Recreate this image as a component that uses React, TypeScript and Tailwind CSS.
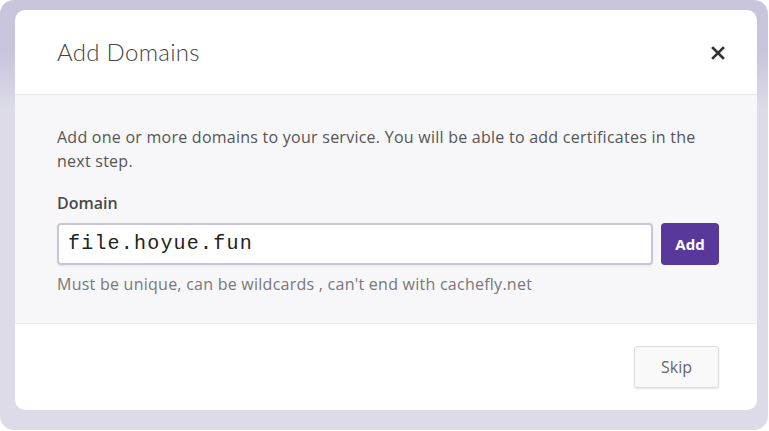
import React from "react";

export default function App() {
  return (
    <div className="w-[769px] h-[431px] bg-white">
      <div className="w-[768px] h-[430px] rounded-[14px] bg-gradient-to-b from-[#c8c4dc] from-[12%] to-[#dcdbe7] to-[25%] pt-[10px] pl-[15px]">
        <div className="w-[742px] h-[400px] rounded-[10px] bg-white overflow-hidden flex flex-col">
          <div className="h-[85px] flex items-center justify-between pl-[42px] pr-[32px] border-b border-[#ebebef]">
            <h1
              className="text-[24px] font-light text-[#444] tracking-[0.3px]"
              style={{ fontFamily: "Lato, 'Open Sans', sans-serif" }}
            >
              Add Domains
            </h1>
            <svg width="14" height="14" viewBox="0 0 14 14" className="mt-[2px]">
              <path d="M2 2 L12 12 M12 2 L2 12" stroke="#333" strokeWidth="2.6" strokeLinecap="square" />
            </svg>
          </div>
          <div
            className="bg-[#f7f7f9] pl-[42px] pr-[38px] pt-[30px] pb-[27px] text-[16px] leading-[24px] text-[#555] tracking-[0.25px]"
            style={{ fontFamily: "'Open Sans', sans-serif" }}
          >
            <p>Add one or more domains to your service. You will be able to add certificates in the next step.</p>
            <div className="mt-[18px] font-semibold text-[#4a4a4a] tracking-normal">Domain</div>
            <div className="mt-[8px] flex gap-[8px]">
              <div className="w-[596px] h-[42px] rounded-[4px] border-2 border-[#c9c6d8] bg-white flex items-center pl-[9px] shadow-[0_1px_2px_rgba(0,0,0,0.08)]">
                <span
                  className="text-[20px] text-[#222] tracking-[1.2px]"
                  style={{ fontFamily: "'Liberation Mono', monospace" }}
                >
                  file.hoyue.fun
                </span>
              </div>
              <button
                className="w-[58px] h-[42px] rounded-[4px] bg-[#58389b] text-white text-[15px] font-bold tracking-normal"
                style={{ fontFamily: "'Open Sans', sans-serif" }}
              >
                Add
              </button>
            </div>
            <p className="mt-[7px] text-[#777]">Must be unique, can be wildcards , can't end with cachefly.net</p>
          </div>
          <div className="flex-1 border-t border-[#ebebef] flex justify-end items-start pt-[22px] pr-[38px]">
            <button
              className="w-[85px] h-[42px] rounded-[3px] border border-[#dcdce0] bg-[#f9f9fa] text-[16px] text-[#666] shadow-[0_1px_2px_rgba(0,0,0,0.1)]"
              style={{ fontFamily: "'Open Sans', sans-serif" }}
            >
              Skip
            </button>
          </div>
        </div>
      </div>
    </div>
  );
}
